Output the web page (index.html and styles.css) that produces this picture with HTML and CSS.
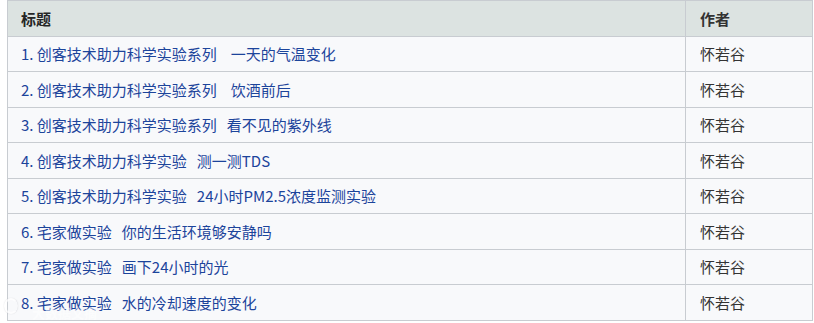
FILE: index.html
```html
<!DOCTYPE html>
<html lang="zh">
<head>
<meta charset="utf-8">
<link rel="stylesheet" href="styles.css">
</head>
<body>
<div class="wrap">
<table class="list">
  <thead>
    <tr><th class="c-title">标题</th><th class="c-author">作者</th></tr>
  </thead>
  <tbody>
    <tr><td><a>1. 创客技术助力科学实验系列<span class="gap3"></span>一天的气温变化</a></td><td>怀若谷</td></tr>
    <tr><td><a>2. 创客技术助力科学实验系列<span class="gap3"></span>饮酒前后</a></td><td>怀若谷</td></tr>
    <tr><td><a>3. 创客技术助力科学实验系列<span class="gap2"></span>看不见的紫外线</a></td><td>怀若谷</td></tr>
    <tr><td><a>4. 创客技术助力科学实验<span class="gap2"></span>测一测TDS</a></td><td>怀若谷</td></tr>
    <tr><td><a>5. 创客技术助力科学实验<span class="gap2"></span>24小时PM2.5浓度监测实验</a></td><td>怀若谷</td></tr>
    <tr><td><a>6. 宅家做实验<span class="gap2"></span>你的生活环境够安静吗</a></td><td>怀若谷</td></tr>
    <tr><td><a>7. 宅家做实验<span class="gap2"></span>画下24小时的光</a></td><td>怀若谷</td></tr>
    <tr><td><a>8. 宅家做实验<span class="gap2"></span>水的冷却速度的变化</a></td><td>怀若谷</td></tr>
  </tbody>
</table>
<div class="watermark"><span class="wm-logo"></span><span class="wm-text">大数据文摘</span></div>
</div>
</body>
</html>
```
FILE: styles.css
```css
html, body { margin: 0; padding: 0; background: #ffffff; }
body { font-family: "Noto Sans CJK SC", "Noto Sans", sans-serif; font-size: 15px; color: #222; }
.wrap { position: relative; padding-left: 7px; width: 806px; }
.list { border-collapse: collapse; width: 806px; background: #f8f9fb; table-layout: fixed; }
.list th, .list td { border: 1px solid #c8ccd1; text-align: left; vertical-align: middle; padding: 0 13px; height: 34px; line-height: 20px; }
.list th { background: #dce3e1; font-weight: bold; color: #252525; height: 35px; }
.list tbody tr:nth-child(even) td { height: 35px; }
.c-title { width: 651px; }
.c-author { width: auto; padding-left: 14px; }
.list td + td, .list th + th { padding-left: 14px; color: #333; }
.list a { color: #1c449b; text-decoration: none; }
.gap3 { display: inline-block; width: 14px; }
.gap2 { display: inline-block; width: 10px; }
.watermark { position: absolute; left: 4px; top: 298px; display: flex; align-items: flex-end; gap: 14px; pointer-events: none; }
.wm-logo { width: 14px; height: 16px; border: 2px solid rgba(255,255,255,0.7); border-radius: 50%; box-sizing: border-box; border-right-color: transparent; box-shadow: 0 0 1px rgba(160,160,170,0.5); }
.wm-text { color: rgba(255,255,255,0.55); font-size: 13px; font-weight: bold; line-height: 14px; margin-bottom: -6px; }
```
